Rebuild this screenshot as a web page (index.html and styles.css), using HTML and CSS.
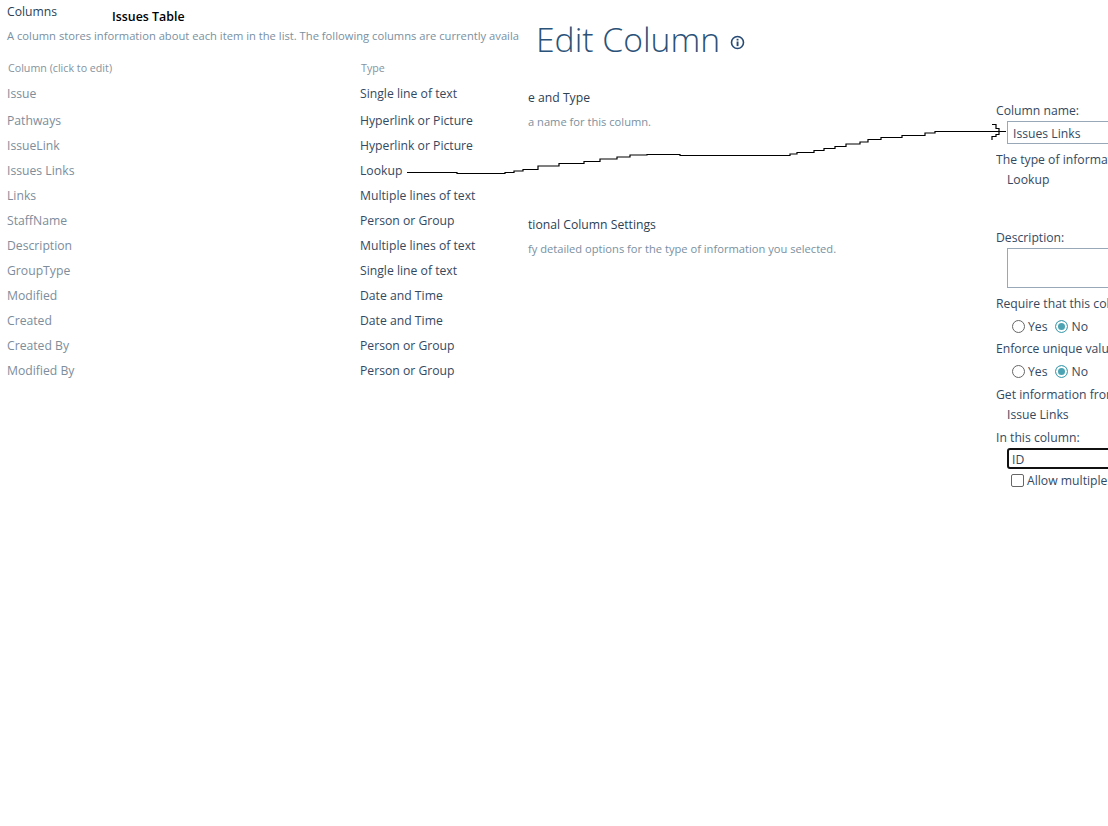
FILE: index.html

```html
<!DOCTYPE html>
<html lang="en">
<head>
    <meta charset="UTF-8">
    <title>Edit Column</title>
    <link rel="stylesheet" href="styles.css">
</head>
<body>
<div class="Page">
    <div class="Columns">
        <div class="Columns-title">Columns</div>
        <div class="Columns-desc">A column stores information about each item in the list. The following columns are currently available in this list:</div>
        <div class="Columns-row Columns-head">
            <span class="Columns-name">Column (click to edit)</span>
            <span class="Columns-type">Type</span>
        </div>
        <div class="Columns-row Columns-first"><span class="Columns-name">Issue</span><span class="Columns-type">Single line of text</span></div>
        <div class="Columns-row Columns-second"><span class="Columns-name">Pathways</span><span class="Columns-type">Hyperlink or Picture</span></div>
        <div class="Columns-row"><span class="Columns-name">IssueLink</span><span class="Columns-type">Hyperlink or Picture</span></div>
        <div class="Columns-row"><span class="Columns-name">Issues Links</span><span class="Columns-type">Lookup</span></div>
        <div class="Columns-row"><span class="Columns-name">Links</span><span class="Columns-type">Multiple lines of text</span></div>
        <div class="Columns-row"><span class="Columns-name">StaffName</span><span class="Columns-type">Person or Group</span></div>
        <div class="Columns-row"><span class="Columns-name">Description</span><span class="Columns-type">Multiple lines of text</span></div>
        <div class="Columns-row"><span class="Columns-name">GroupType</span><span class="Columns-type">Single line of text</span></div>
        <div class="Columns-row"><span class="Columns-name">Modified</span><span class="Columns-type">Date and Time</span></div>
        <div class="Columns-row"><span class="Columns-name">Created</span><span class="Columns-type">Date and Time</span></div>
        <div class="Columns-row"><span class="Columns-name">Created By</span><span class="Columns-type">Person or Group</span></div>
        <div class="Columns-row"><span class="Columns-name">Modified By</span><span class="Columns-type">Person or Group</span></div>
    </div>

    <div class="Edit">
        <div class="Edit-title">
            <h1>Edit Column</h1>
            <svg class="Edit-info" width="15" height="15" viewBox="0 0 15 15">
                <circle cx="7.5" cy="7.5" r="6" fill="none" stroke="#264a73" stroke-width="1.6"/>
                <rect x="6.6" y="6.5" width="1.9" height="4.6" fill="#264a73"/>
                <rect x="6.6" y="3.8" width="1.9" height="1.7" fill="#264a73"/>
            </svg>
        </div>
        <div class="Edit-section Edit-name">
            <div class="Edit-head">e and Type</div>
            <div class="Edit-desc">a name for this column.</div>
        </div>
        <div class="Edit-section Edit-settings">
            <div class="Edit-head">tional Column Settings</div>
            <div class="Edit-desc">fy detailed options for the type of information you selected.</div>
        </div>
    </div>

    <div class="Form">
        <div class="Form-label Form-top">Column name:</div>
        <div class="Form-input">Issues Links</div>
        <div class="Form-label Form-type">The type of information in this column is:</div>
        <div class="Form-value">Lookup</div>
        <div class="Form-label Form-description">Description:</div>
        <div class="Form-textarea"></div>
        <div class="Form-label Form-require">Require that this column contains information:</div>
        <div class="Form-radios">
            <span class="Radio"></span><span>Yes</span>
            <span class="Radio Radio-on"></span><span>No</span>
        </div>
        <div class="Form-label Form-unique">Enforce unique values:</div>
        <div class="Form-radios">
            <span class="Radio"></span><span>Yes</span>
            <span class="Radio Radio-on"></span><span>No</span>
        </div>
        <div class="Form-label Form-get">Get information from:</div>
        <div class="Form-value">Issue Links</div>
        <div class="Form-label Form-in">In this column:</div>
        <div class="Form-select">ID</div>
        <div class="Form-check"><span class="Check"></span><span>Allow multiple values</span></div>
    </div>
</div>

<div class="Tag">Issues Table</div>

<!-- hand drawn arrow from Lookup to the column name box -->
<svg class="Arrow" width="1108" height="826" viewBox="0 0 1108 826">
    <path fill="none" stroke="#000" stroke-width="1.2" d="M407 172.5H457V173.5H505V172.5H514V171H523V169.5H538V166H559V163.5H584V161.5H600V159H617V157H630V155H647V154.5H680V155.5H790V154H797V152.5H814V150.5H824V148.5H835V146.5H846V144H860V142H868V139.5H881V137.5H902V135.5H925V133H935V131.5H1006"/>
    <path fill="none" stroke="#000" stroke-width="1.2" d="M992 124.5H996V128.5H999V131.5M999 131.5V134.5H996V136.5H992V140"/>
</svg>
</body>
</html>
```

FILE: styles.css

```css
html, body {
    margin: 0;
    width: 100%;
    height: 100%;
    overflow: hidden;
    background: #fff;
}
body {
    position: relative;
    font-family: "Open Sans", "Noto Sans", sans-serif;
    font-size: 12.2px;
    color: #34495f;
}
.Page {
    display: flex;
    height: 826px;
}
.Columns {
    width: 519px;
    flex: none;
    overflow: hidden;
    padding-top: 3px;
    box-sizing: border-box;
    white-space: nowrap;
}
.Columns-title {
    padding-left: 7px;
    line-height: 18px;
    color: #2b3f55;
}
.Columns-desc {
    margin-top: 6px;
    padding-left: 7px;
    line-height: 18px;
    font-size: 11.2px;
    color: #7a909f;
}
.Columns-row {
    display: flex;
    height: 25px;
    line-height: 25px;
}
.Columns-head {
    margin-top: 15px;
    height: 17px;
    line-height: 17px;
    font-size: 10.7px;
}
.Columns-first {
    margin-top: 4px;
    height: 27px;
    line-height: 25px;
}
.Columns-name {
    width: 360px;
    flex: none;
    padding-left: 7px;
    box-sizing: border-box;
    color: #7d8d9b;
}
.Columns-type {
    color: #34495f;
}
.Columns-head .Columns-name, .Columns-head .Columns-type {
    color: #8593a0;
}
.Columns-head .Columns-name {
    padding-left: 8px;
}
.Columns-head .Columns-type {
    padding-left: 1px;
}
.Edit {
    width: 477px;
    flex: none;
    overflow: hidden;
    white-space: nowrap;
}
.Edit-title {
    display: flex;
    align-items: center;
    margin: 13px 0 0 17px;
    height: 52px;
}
.Edit-title h1 {
    margin: 0;
    font-size: 33.7px;
    font-weight: 300;
    color: #2b5278;
}
.Edit-info {
    margin: 6px 0 0 10px;
}
.Edit-section {
    padding-left: 9px;
}
.Edit-name {
    margin-top: 24px;
}
.Edit-settings {
    margin-top: 85px;
}
.Edit-head {
    line-height: 18px;
    color: #2b3f55;
}
.Edit-desc {
    margin-top: 6px;
    line-height: 18px;
    font-size: 11.15px;
    color: #7a909f;
}
.Form {
    flex: 1;
    min-width: 0;
    overflow: hidden;
    white-space: nowrap;
}
.Form-label {
    line-height: 18px;
}
.Form-top {
    margin-top: 102px;
}
/* boxes run on past the right edge of the screenshot */
.Form-input, .Form-textarea, .Form-select {
    margin-right: -20px;
}
.Form-input, .Form-textarea {
    margin-left: 11px;
    border: 1px solid #98a8b8;
    box-sizing: border-box;
}
.Form-input {
    height: 23px;
    line-height: 23px;
    padding-left: 5px;
    margin-top: 1px;
}
.Form-type {
    margin-top: 7px;
}
.Form-value {
    margin: 2px 0 0 11px;
    line-height: 18px;
}
.Form-description {
    margin-top: 40px;
}
.Form-textarea {
    height: 40px;
    margin-top: 1px;
}
.Form-require {
    margin-top: 7px;
}
.Form-radios {
    display: flex;
    align-items: center;
    height: 18px;
    margin: 4px 0 0 16px;
}
.Radio {
    width: 11px;
    height: 11px;
    margin-right: 3px;
    border: 1px solid #666;
    border-radius: 50%;
    flex: none;
}
.Radio-on {
    margin-left: 8px;
    border-color: #4ba3b3;
    background: #4ba3b3;
    box-shadow: inset 0 0 0 2px #fff;
}
.Form-unique {
    margin-top: 5px;
}
.Form-get {
    margin-top: 6px;
}
.Form-in {
    margin-top: 5px;
}
.Form-select {
    margin-top: 1px;
    margin-left: 11px;
    height: 21px;
    line-height: 19px;
    padding-left: 3px;
    border: 2px solid #111;
    border-radius: 3px;
    box-sizing: border-box;
}
.Form-check {
    display: flex;
    align-items: center;
    height: 18px;
    margin: 2px 0 0 15px;
}
.Check {
    width: 11px;
    height: 11px;
    margin-right: 3px;
    border: 1px solid #666;
    border-radius: 2px;
    flex: none;
}
.Tag {
    position: absolute;
    left: 112px;
    top: 8px;
    font-size: 12.4px;
    font-weight: 600;
    line-height: 18px;
    color: #000;
}
.Arrow {
    position: absolute;
    left: 0;
    top: 0;
    pointer-events: none;
}
```
